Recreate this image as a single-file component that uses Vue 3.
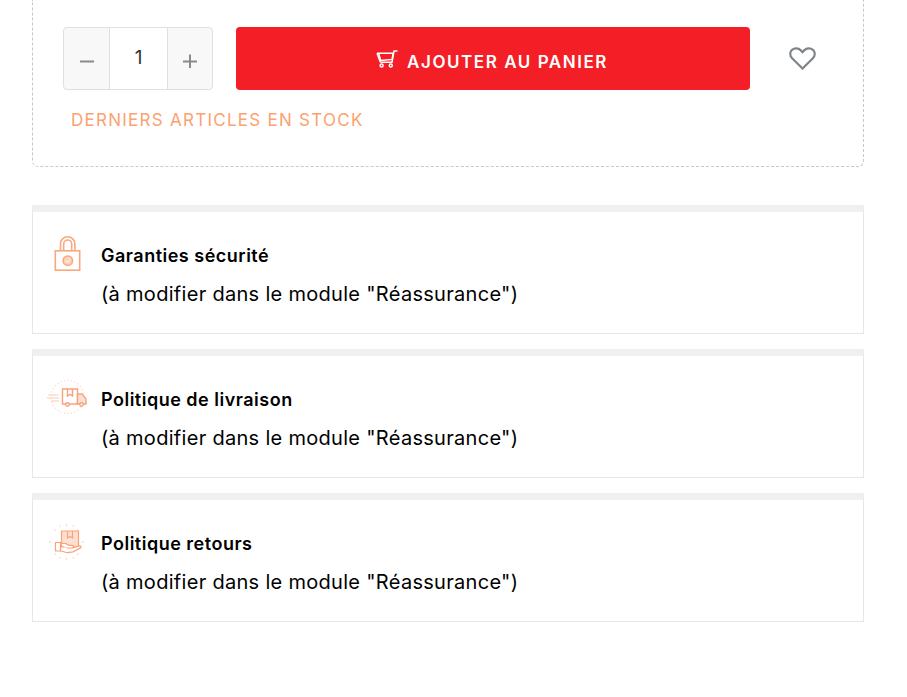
<template>
  <div class="page">
    <div class="buy-box">
      <div class="buy-row">
        <div class="qty">
          <button class="qty-btn minus">
            <svg width="14" height="14" viewBox="0 0 14 14"><path d="M0 7.5h14" stroke="#8a8a8a" stroke-width="2" /></svg>
          </button>
          <div class="qty-value">1</div>
          <button class="qty-btn">
            <svg width="14" height="14" viewBox="0 0 14 14"><path d="M0 7.5h14M7 .5v14" stroke="#8a8a8a" stroke-width="2" /></svg>
          </button>
        </div>
        <button class="add-btn">
          <svg class="cart" width="22" height="18" viewBox="0 0 22 18" fill="none" stroke="#fff" stroke-width="1.5">
            <path d="M21.500 1H18l-2 11.200H4.600" />
            <path d="M1 3.200h16.200l-1.100 6.200-11.400 1L2.600 3.200" />
            <path d="M1 3.200l3.400 9" />
            <circle cx="5.600" cy="15.600" r="1.500" />
            <circle cx="14.800" cy="15.600" r="1.500" />
          </svg>
          <span>AJOUTER AU PANIER</span>
        </button>
        <svg class="heart" width="27" height="23" viewBox="0 0 29 25" fill="none" stroke="#7f858b" stroke-width="2.400">
          <path d="M14.500 23.400 3.200 12.200C.4 9.400.6 5.200 3.100 3.100 5.800.8 10 .9 12.400 3.400l2.100 2.200 2.100-2.200C19 .9 23.200.8 25.900 3.100c2.500 2.100 2.700 6.300-.1 9.100z" />
        </svg>
      </div>
      <div class="stock">DERNIERS ARTICLES EN STOCK</div>
    </div>

    <div class="reassurance">
      <div v-for="block in blocks" :key="block.title" class="block">
        <div class="block-icon">
          <svg v-if="block.icon === 'lock'" width="36" height="40" viewBox="0 0 36 40" fill="none" stroke="#f9a77e" stroke-width="1.6">
            <rect x="6.300" y="14.800" width="24.400" height="19.400" />
            <path d="M11.500 14V8a7.200 7.200 0 0 1 14.400 0v6" />
            <path d="M14.700 14V8a4 4 0 0 1 8 0v6" />
            <circle cx="18.800" cy="24.700" r="4.700" fill="#fbd3bd" />
            <path d="M16.800 24.800l1.500 1.500 2.700-2.800" stroke="#fff" stroke-width="1" />
          </svg>
          <svg v-else-if="block.icon === 'truck'" width="40" height="36" viewBox="0 0 40 36" fill="none" stroke="#f9a27a" stroke-width="1.400">
            <circle cx="20.500" cy="17" r="16.500" stroke="#fde0d0" stroke-width="1.200" stroke-dasharray="1.500 2" />
            <path d="M1.500 15h10M0 18h12M4 21h8" stroke="#fcc9ad" stroke-width="1" />
            <path d="M15.500 9h15v15h-15z" fill="#fff" />
            <path d="M20.500 9v7l2.500-1.600 2.500 1.600V9" />
            <path d="M30.500 14h4.500l4 5v5h-8.500z" fill="#fde3d5" />
            <circle cx="20.500" cy="24.500" r="1.700" fill="#fff" />
            <circle cx="34.500" cy="24.500" r="1.700" fill="#fff" />
          </svg>
          <svg v-else width="38" height="38" viewBox="0 0 38 38" fill="none" stroke="#f9a27a" stroke-width="1.200">
            <path d="M18.500 0v2.500M18.500 33.500V36M1 18h2.500M33.500 18H36M6.500 5.500l1.500 1.500M30.500 5.500L29 7M6.500 31l1.500-1.500M30.500 31L29 29.500M11.500 1.500l.8 1.500M25.500 1.500l-.8 1.500M11.500 34.500l.8-1.500M25.500 34.500l-.8-1.500" stroke="#fde0d0" stroke-width="1.500" />
            <path d="M13.500 7h17v16h-17z" fill="#fde0d0" />
            <path d="M19.500 7v7l2.500-1.500 2.500 1.500V7" />
            <path d="M7.500 18.500h5v8.500h-5z" fill="#fff" />
            <path d="M12.500 19.500h5l3.500 1.800h3c1.800 0 1.800 2.700 0 2.700h-5.500M24.500 23.800l6.500-1.900c1.800-.5 2.800 1 1.400 2L25 27.800l-6 .9-6.500-2" fill="#fff" />
          </svg>
        </div>
        <div class="block-text">
          <div class="block-title">{{ block.title }}</div>
          <div class="block-desc">(à modifier dans le module "Réassurance")</div>
        </div>
      </div>
    </div>
  </div>
</template>

<script setup>
const blocks = [
  { title: 'Garanties sécurité', icon: 'lock' },
  { title: 'Politique de livraison', icon: 'truck' },
  { title: 'Politique retours', icon: 'return' }
]
</script>

<style>
html, body {
  margin: 0;
  background: #fff;
}
</style>

<style scoped>
.page {
  height: 697px;
  overflow: hidden;
  padding: 0 43px 0 32px;
  font-family: Inter, "Liberation Sans", sans-serif;
  color: #000;
}

.buy-box {
  height: 167px;
  box-sizing: border-box;
  padding: 27px 30px 0;
  border: 1px dashed #c8c8c8;
  border-top: 0;
  border-radius: 0 0 6px 6px;
}

.buy-row {
  display: flex;
  align-items: flex-start;
}

.qty {
  display: flex;
  width: 150px;
  height: 63px;
  box-sizing: border-box;
  border: 1px solid #e0e0e0;
  border-radius: 4px;
  overflow: hidden;
  background: #f8f8f8;
}

.qty-btn {
  width: 44px;
  padding: 8px 0 0;
  border: 0;
  background: none;
}

.qty-btn.minus {
  width: 45px;
}

.qty-value {
  width: 59px;
  box-sizing: border-box;
  border-left: 1px solid #e0e0e0;
  border-right: 1px solid #e0e0e0;
  background: #fff;
  text-align: center;
  font-size: 19px;
  line-height: 59px;
  color: #333;
}

.add-btn {
  display: flex;
  align-items: center;
  justify-content: center;
  gap: 9px;
  width: 514px;
  height: 63px;
  margin-left: 23px;
  padding: 6px 2px 0 0;
  border: 0;
  border-radius: 4px;
  background: #f41f26;
  color: #fff;
  font-family: inherit;
  font-size: 17px;
  font-weight: 600;
  letter-spacing: 1.55px;
}

.cart {
  margin-top: -5px;
}

.heart {
  margin: 20px 0 0 39px;
}

.stock {
  margin: 18px 0 0 8px;
  font-size: 17px;
  line-height: 24px;
  letter-spacing: 1.26px;
  color: #fba26f;
}

.reassurance {
  display: flex;
  flex-direction: column;
  gap: 15px;
  margin-top: 38px;
}

.block {
  display: flex;
  height: 129px;
  box-sizing: border-box;
  padding-top: 24px;
  border: 1px solid #e6e6e6;
  border-top: 7px solid #f0f0f0;
}

.block-icon {
  display: flex;
  justify-content: center;
  width: 67px;
  height: 44px;
}

.block-text {
  padding: 8px 0 0 1px;
}

.block-title {
  font-size: 18px;
  font-weight: 600;
  line-height: 24px;
  letter-spacing: .5px;
}

.block-desc {
  margin-top: 12px;
  font-size: 20px;
  line-height: 28px;
  letter-spacing: .3px;
}
</style>
